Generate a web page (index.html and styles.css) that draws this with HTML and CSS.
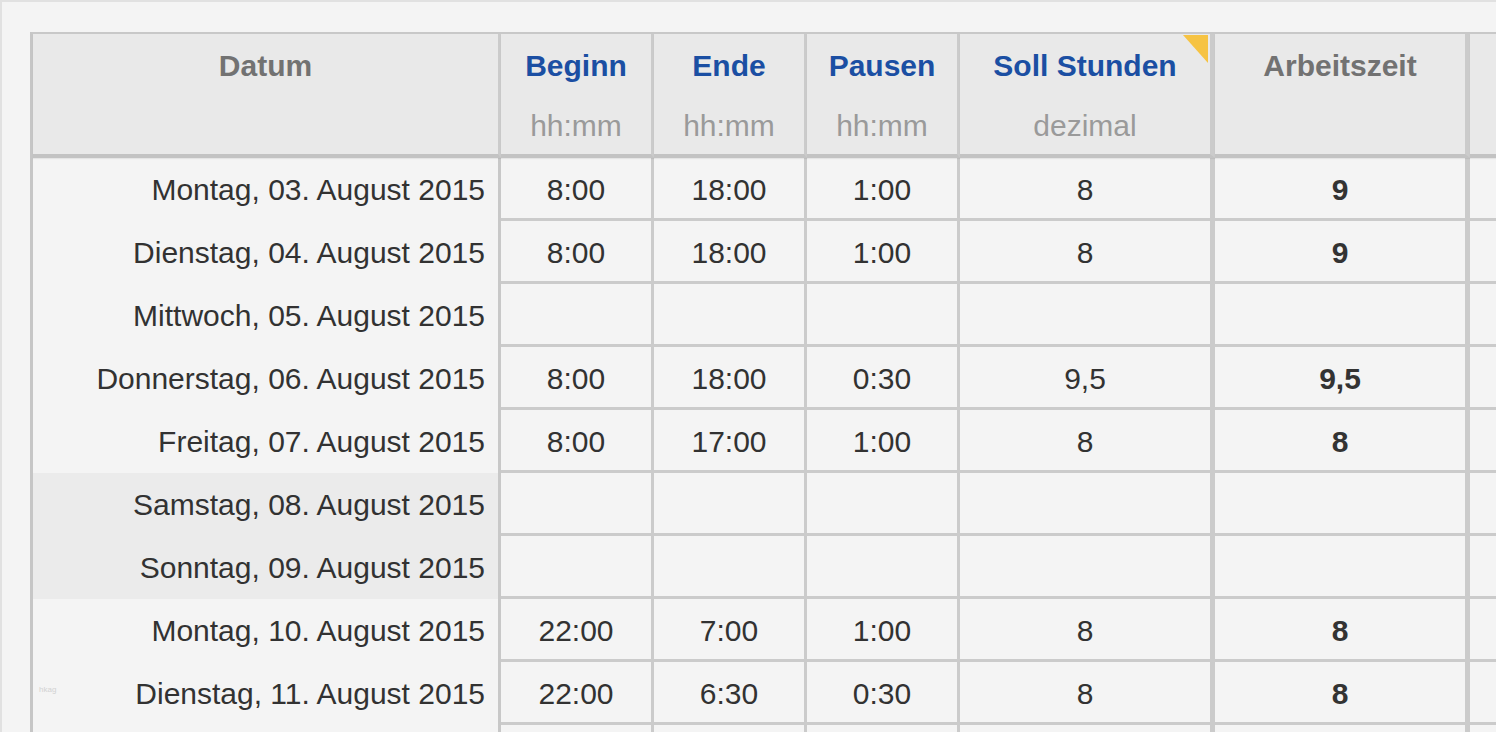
FILE: index.html
```html
<!DOCTYPE html>
<html lang="de">
<head>
<meta charset="utf-8">
<title>Arbeitszeit</title>
<link rel="stylesheet" href="styles.css">
</head>
<body>
<div class="frame">
  <div class="sheet">
    <div class="hcell date-h"><div class="title grey">Datum</div></div>
    <div class="hcell"><div class="title blue">Beginn</div><div class="sub">hh:mm</div></div>
    <div class="hcell"><div class="title blue">Ende</div><div class="sub">hh:mm</div></div>
    <div class="hcell"><div class="title blue">Pausen</div><div class="sub">hh:mm</div></div>
    <div class="hcell thick"><div class="title blue">Soll Stunden</div><div class="sub">dezimal</div><span class="flag"></span></div>
    <div class="hcell thick"><div class="title grey">Arbeitszeit</div></div>
    <div class="hcell last"></div>

    <div class="dcell">Montag, 03. August 2015</div>
    <div class="cell">8:00</div><div class="cell">18:00</div><div class="cell">1:00</div>
    <div class="cell thick">8</div><div class="cell thick bold">9</div><div class="cell last"></div>

    <div class="dcell">Dienstag, 04. August 2015</div>
    <div class="cell">8:00</div><div class="cell">18:00</div><div class="cell">1:00</div>
    <div class="cell thick">8</div><div class="cell thick bold">9</div><div class="cell last"></div>

    <div class="dcell">Mittwoch, 05. August 2015</div>
    <div class="cell"></div><div class="cell"></div><div class="cell"></div>
    <div class="cell thick"></div><div class="cell thick bold"></div><div class="cell last"></div>

    <div class="dcell">Donnerstag, 06. August 2015</div>
    <div class="cell">8:00</div><div class="cell">18:00</div><div class="cell">0:30</div>
    <div class="cell thick">9,5</div><div class="cell thick bold">9,5</div><div class="cell last"></div>

    <div class="dcell">Freitag, 07. August 2015</div>
    <div class="cell">8:00</div><div class="cell">17:00</div><div class="cell">1:00</div>
    <div class="cell thick">8</div><div class="cell thick bold">8</div><div class="cell last"></div>

    <div class="dcell weekend">Samstag, 08. August 2015</div>
    <div class="cell"></div><div class="cell"></div><div class="cell"></div>
    <div class="cell thick"></div><div class="cell thick bold"></div><div class="cell last"></div>

    <div class="dcell weekend">Sonntag, 09. August 2015</div>
    <div class="cell"></div><div class="cell"></div><div class="cell"></div>
    <div class="cell thick"></div><div class="cell thick bold"></div><div class="cell last"></div>

    <div class="dcell">Montag, 10. August 2015</div>
    <div class="cell">22:00</div><div class="cell">7:00</div><div class="cell">1:00</div>
    <div class="cell thick">8</div><div class="cell thick bold">8</div><div class="cell last"></div>

    <div class="dcell"><span class="mark">hkag</span><span>Dienstag, 11. August 2015</span></div>
    <div class="cell">22:00</div><div class="cell">6:30</div><div class="cell">0:30</div>
    <div class="cell thick">8</div><div class="cell thick bold">8</div><div class="cell last"></div>

    <div class="dcell"></div>
    <div class="cell"></div><div class="cell"></div><div class="cell"></div>
    <div class="cell thick"></div><div class="cell thick bold"></div><div class="cell last"></div>
  </div>
</div>
</body>
</html>
```
FILE: styles.css
```css
html, body {
  margin: 0;
  padding: 0;
  background: #f4f4f4;
  overflow: hidden;
  height: 732px;
}

body {
  font-family: "Liberation Sans", Arial, Helvetica, sans-serif;
  color: #323232;
}

.frame {
  border-top: 2px solid #e1e1e1;
  border-left: 2px solid #e1e1e1;
  padding: 30px 0 0 28px;
  height: 732px;
  box-sizing: border-box;
  overflow: hidden;
}

.sheet {
  display: grid;
  grid-template-columns: 468px 153px 153px 153px 255px 255px 26px;
  grid-template-rows: 124px;
  grid-auto-rows: 63px;
  border-top: 2px solid #c8c8c8;
  border-left: 3px solid #c6c6c6;
  width: max-content;
}

.hcell {
  position: relative;
  background: #e9e9e9;
  border-right: 3px solid #cbcbcb;
  border-bottom: 4px solid #c3c3c3;
  box-shadow: 0 1px 1px rgba(0, 0, 0, 0.06);
  box-sizing: border-box;
  display: flex;
  flex-direction: column;
  align-items: center;
  font-size: 30px;
}

.title {
  font-weight: bold;
  line-height: 40px;
  padding-top: 12px;
}

.sub {
  line-height: 40px;
  margin-top: 20px;
  color: #9a9a9a;
}

.grey { color: #727272; }
.blue { color: #1b4fa3; }

.flag {
  position: absolute;
  top: 1px;
  right: 2px;
  width: 25px;
  height: 28px;
  background: #f6c343;
  clip-path: polygon(0 0, 100% 0, 100% 100%);
}

.dcell {
  border-right: 3px solid #c8c8c8;
  box-sizing: border-box;
  display: flex;
  align-items: center;
  justify-content: flex-end;
  padding-right: 13px;
  padding-top: 1px;
  font-size: 30px;
  background: #f4f4f4;
}

.dcell.weekend {
  background: #ebebeb;
}

.mark {
  margin-right: auto;
  margin-left: 6px;
  margin-bottom: 10px;
  font-size: 8px;
  color: #d2d2d2;
}

.cell {
  border-right: 3px solid #cbcbcb;
  border-bottom: 3px solid #cbcbcb;
  box-sizing: border-box;
  display: flex;
  align-items: center;
  justify-content: center;
  padding-top: 4px;
  font-size: 30px;
  background: #f4f4f4;
}

.thick {
  border-right-width: 5px;
}

.bold {
  font-weight: bold;
  color: #333;
}

.last {
  border-right: none;
}
```
